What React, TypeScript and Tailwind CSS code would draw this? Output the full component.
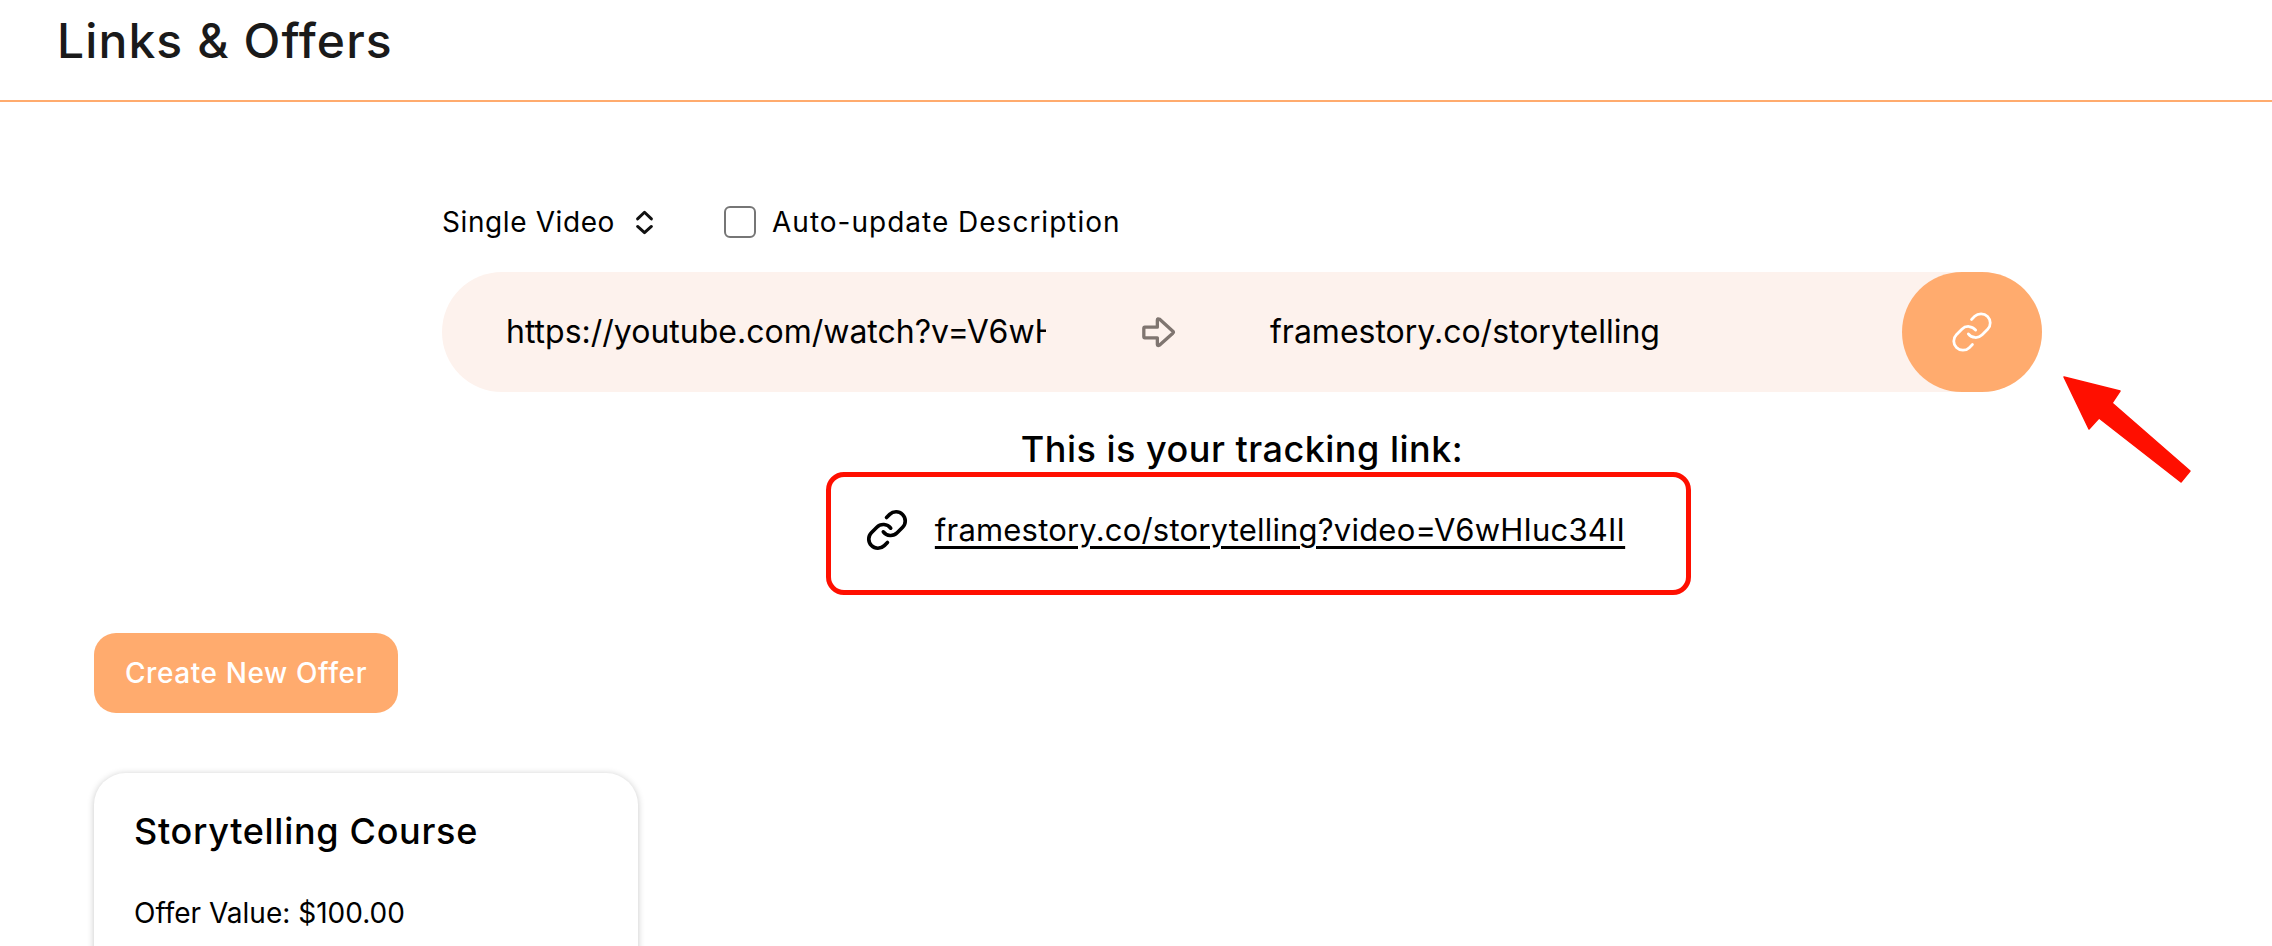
import React from 'react';
import { Link as LinkIcon } from 'lucide-react';

const App: React.FC = () => {
  return (
    <div className="relative h-screen overflow-hidden bg-white font-['Inter',sans-serif] text-black">
      <header className="flex h-[102px] items-start border-b-2 border-[#ffab6e] pl-[57px] pt-[12px]">
        <h1 className="text-[48px] leading-[58px] font-medium tracking-[1.1px] text-[#1a1a1a]">Links &amp; Offers</h1>
      </header>

      <main className="flex flex-col">
        <section className="ml-[442px] flex w-[1600px] flex-col pt-[104px]">
          <div className="flex h-[32px] items-center">
            <div className="flex w-[282px] items-center text-[28px] leading-[32px]">
              <span className="w-[193px] tracking-[0.6px]">Single Video</span>
              <svg className="h-[25px] w-[19px]" viewBox="48 28 56 76" fill="none" stroke="#111" strokeWidth="9" strokeLinecap="round" strokeLinejoin="round">
                <path d="M55 55 L76 35 L97 55" />
                <path d="M55 78 L76 97 L97 78" />
              </svg>
            </div>
            <input type="checkbox" readOnly className="h-[32px] w-[32px] appearance-none rounded-[6px] border-2 border-[#767676] bg-white" />
            <span className="ml-[16px] text-[28px] leading-[32px] tracking-[1px]">Auto-update Description</span>
          </div>

          <div className="mt-[34px] flex h-[120px] items-center rounded-full bg-[#fdf2ed] pl-[64px]">
            <input
              readOnly
              value="https://youtube.com/watch?v=V6wHIuc34II"
              className="w-[540px] bg-transparent text-[32px] text-black outline-none"
            />
            <svg className="ml-[95px] h-[33px] w-[36px]" viewBox="64 46 108 100" fill="none" stroke="#7f7570" strokeWidth="10" strokeLinejoin="round">
              <path d="M75 80 H113 V58 Q113 52 120 56 L160 92 Q163 95 160 98 L120 134 Q113 138 113 132 V112 H75 Q72 112 72 108 V84 Q72 80 75 80 Z" />
            </svg>
            <span className="ml-[93px] flex-1 text-[32px]">framestory.co/storytelling</span>
            <button className="flex h-[120px] w-[140px] items-center justify-center rounded-full bg-[#ffab6e] text-white">
              <LinkIcon className="h-[44px] w-[44px]" strokeWidth={1.5} />
            </button>
          </div>

          <div className="mt-[35px] text-center text-[36px] leading-[44px] font-medium tracking-[0.5px]">This is your tracking link:</div>

          <div className="mt-[37px] flex items-center justify-center pl-[6px]">
            <LinkIcon className="h-[44px] w-[44px]" strokeWidth={2} />
            <a className="ml-[26px] text-[31px] leading-[40px] tracking-[0.2px] underline decoration-[3px] underline-offset-[5px]">
              framestory.co/storytelling?video=V6wHIuc34II
            </a>
          </div>
        </section>

        <section className="ml-[94px] mt-[81px] flex flex-col items-start">
          <button className="flex h-[80px] w-[304px] items-center justify-center rounded-[22px] bg-[#ffab6e] text-[28px] font-medium tracking-[0.6px] text-white">
            Create New Offer
          </button>
          <div className="mt-[60px] h-[400px] w-[544px] rounded-[32px] bg-white px-[40px] pt-[36px] shadow-[0_1px_7px_rgba(0,0,0,0.22)]">
            <h2 className="text-[36px] leading-[44px] font-medium tracking-[0.7px]">Storytelling Course</h2>
            <p className="mt-[42px] text-[28px] leading-[36px]">Offer Value: $100.00</p>
          </div>
        </section>
      </main>

      {/* red annotation drawn over the screenshot */}
      <div className="absolute left-[826px] top-[472px] h-[123px] w-[865px] rounded-[18px] border-[5px] border-[#ff0f00]" />
      <svg className="absolute left-[2060px] top-[372px] h-[115px] w-[135px]" viewBox="2060 372 135 115">
        <path
          d="M2064 377 L2120 391 L2112 403 L2190 471 L2181 482 L2099 418 L2089 429 Z"
          fill="#ff0f00"
          stroke="#ff0f00"
          strokeWidth="1.5"
          strokeLinejoin="round"
        />
      </svg>
    </div>
  );
};

export default App;
